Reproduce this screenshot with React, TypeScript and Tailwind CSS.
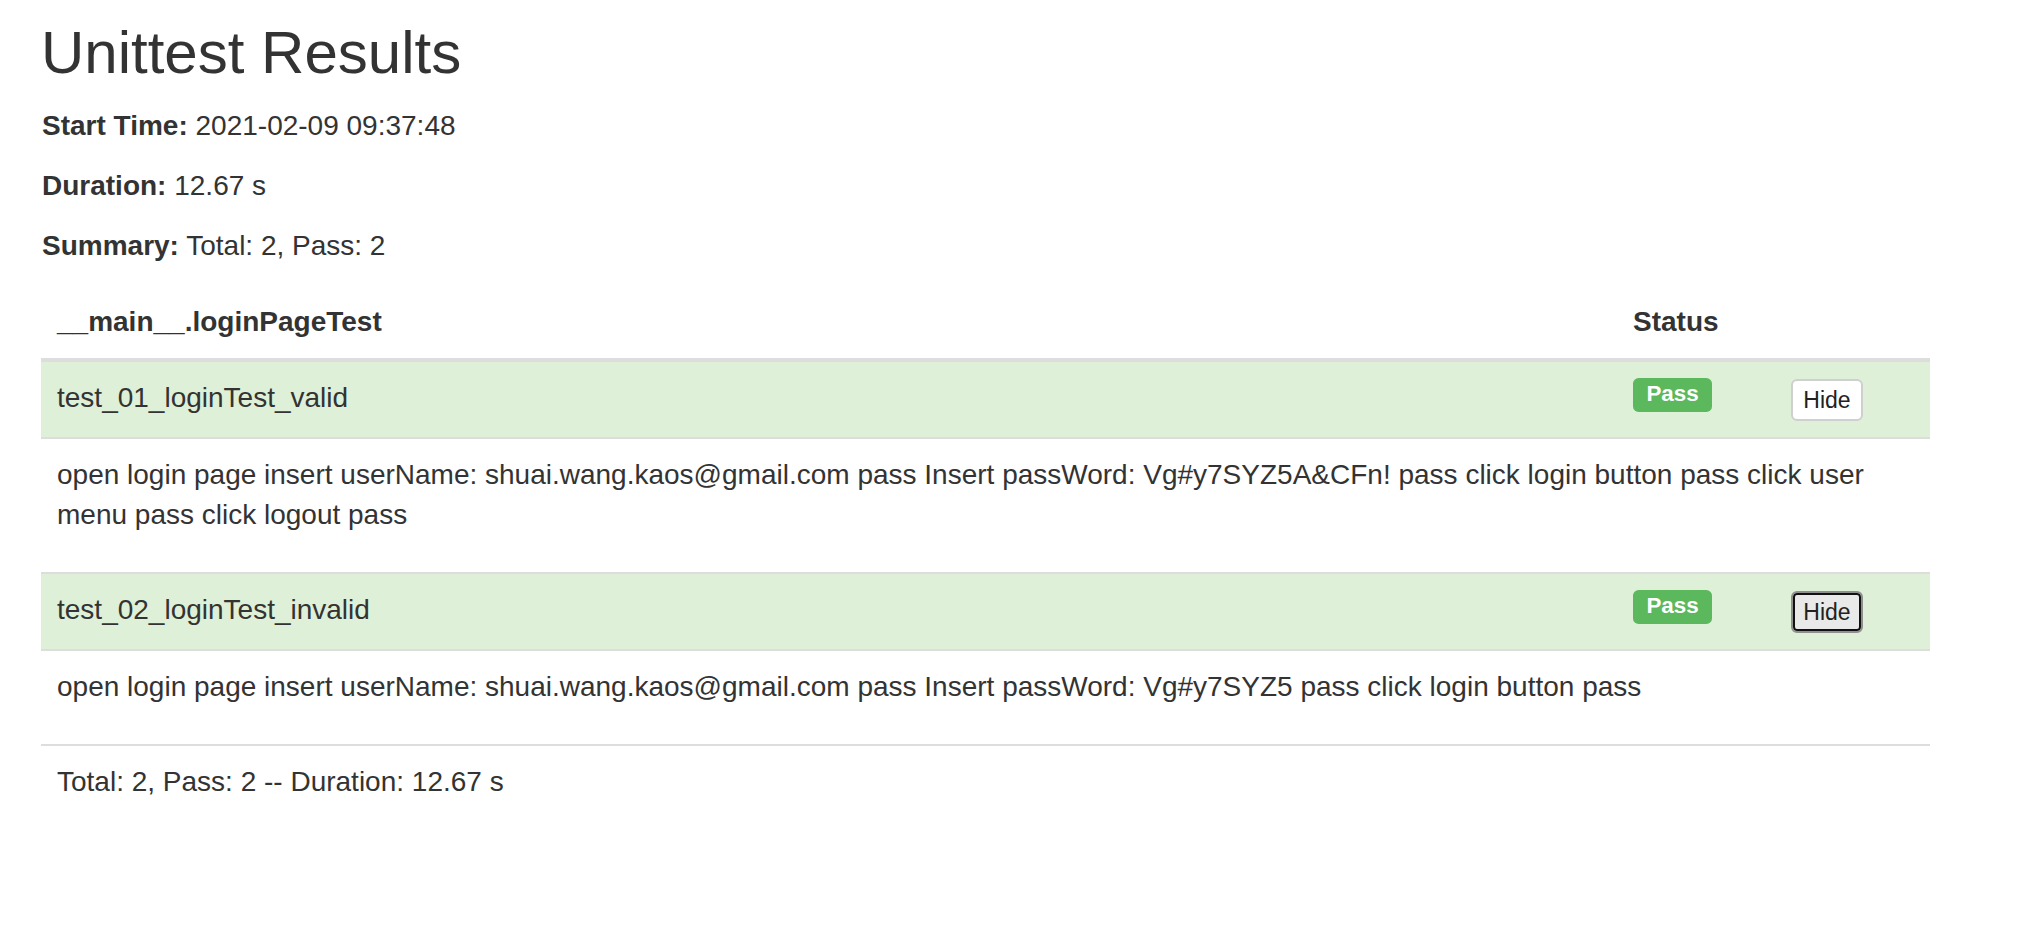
const tests = [
  {
    name: "test_01_loginTest_valid",
    output:
      "open login page insert userName: shuai.wang.kaos@gmail.com pass Insert passWord: Vg#y7SYZ5A&CFn! pass click login button pass click user menu pass click logout pass",
    focused: false,
  },
  {
    name: "test_02_loginTest_invalid",
    output:
      "open login page insert userName: shuai.wang.kaos@gmail.com pass Insert passWord: Vg#y7SYZ5 pass click login button pass",
    focused: true,
  },
]

const TestRow = ({ name, output, focused, first }: { name: string; output: string; focused: boolean; first: boolean }) => (
  <>
    <div className={`grid grid-cols-[1576px_158px_155px] bg-[#dff0d8] ${first ? "" : "border-t-2 border-[#ddd]"}`}>
      <div className="px-4 pt-4 pb-4 leading-[40px]">{name}</div>
      <div className="flex items-start px-4 pt-4">
        <span className="rounded-[5.6px] bg-[#5cb85c] px-[13.4px] pt-[4.5px] pb-[6.7px] text-[22.4px] font-bold leading-none text-white">
          Pass
        </span>
      </div>
      <div className="flex items-start px-4 pt-4 pb-4">
        <button
          className={`mt-px flex h-[42px] w-[72px] items-center justify-center rounded-[6px] border-2 text-[23px] text-[#222] ${
            focused ? "border-[#8f8f8f] bg-[#e9e9e9] shadow-[inset_0_0_0_2px_#111]" : "border-[#cfcfcf] bg-white"
          }`}
        >
          Hide
        </button>
      </div>
    </div>
    <div className="border-t-2 border-[#ddd] px-4 py-4">
      <p className="mb-[21px] leading-[40px]">{output}</p>
    </div>
  </>
)

export default function App() {
  return (
    <div className="min-h-screen bg-white pt-[20px] pl-[41px] font-['Liberation_Sans',Arial,sans-serif] text-[28px] text-[#333]">
      <h1 className="mb-5 text-[60px] leading-[66px] font-normal">Unittest Results</h1>
      <p className="mb-5 pl-px leading-[40px]">
        <strong>Start Time:</strong> 2021-02-09 09:37:48
      </p>
      <p className="mb-5 pl-px leading-[40px]">
        <strong>Duration:</strong> 12.67 s
      </p>
      <p className="mb-5 pl-px leading-[40px]">
        <strong>Summary:</strong> Total: 2, Pass: 2
      </p>

      <div className="w-[1889px]">
        <div className="grid grid-cols-[1576px_158px_155px] border-b-4 border-[#ddd] font-bold">
          <div className="p-4 leading-[40px]">__main__.loginPageTest</div>
          <div className="p-4 leading-[40px]">Status</div>
          <div className="p-4 leading-[40px]"></div>
        </div>
        {tests.map((t, i) => (
          <TestRow key={t.name} {...t} first={i === 0} />
        ))}
        <div className="border-t-2 border-[#ddd] px-4 py-4 leading-[40px]">Total: 2, Pass: 2 -- Duration: 12.67 s</div>
      </div>
    </div>
  )
}
